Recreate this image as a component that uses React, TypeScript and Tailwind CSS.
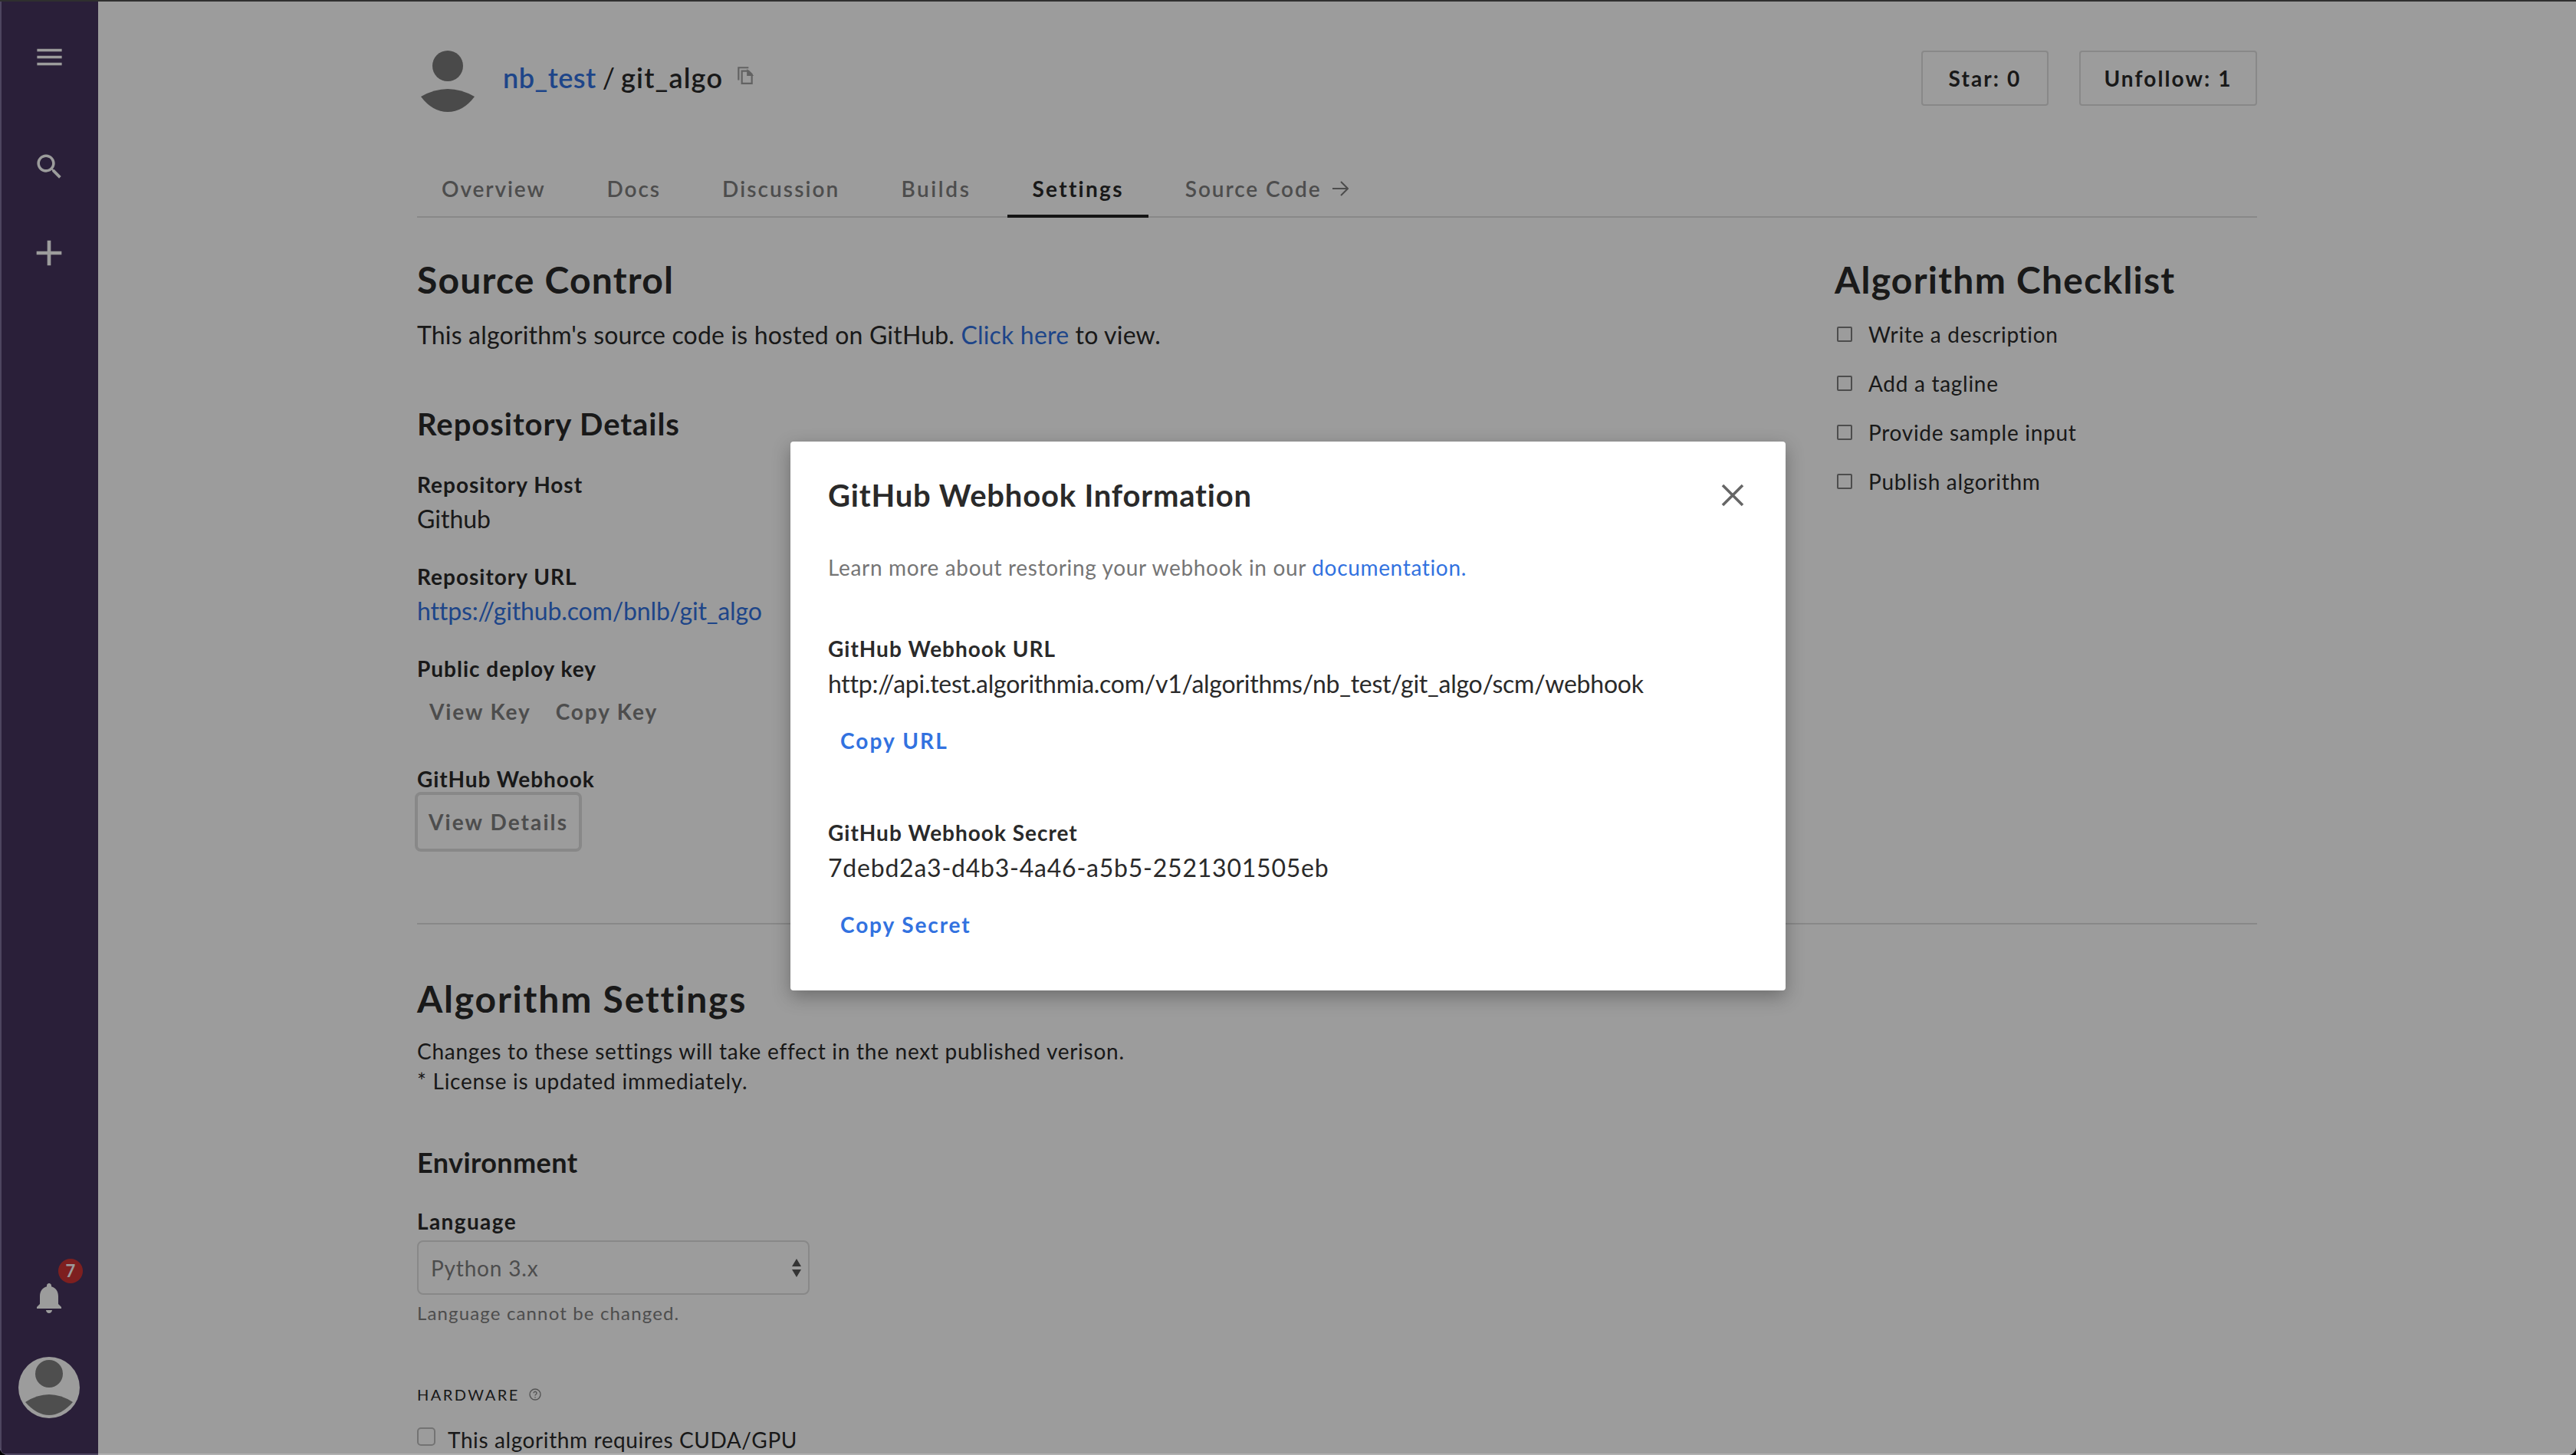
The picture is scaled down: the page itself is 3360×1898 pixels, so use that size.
import React from "react";

const Person = ({ className }: { className?: string }) => (
  <svg viewBox="0 0 70 80" className={className} fill="#7a7a7a">
    <circle cx="35" cy="20" r="20" />
    <path d="M0 60Q35 40 70 60Q55 80 35 80Q15 80 0 60Z" />
  </svg>
);

const tabs = [
  { label: "Overview", cls: "text-[#7e7e7e] tracking-[1.9px]" },
  { label: "Docs", cls: "text-[#7e7e7e] tracking-[1.9px]" },
  { label: "Discussion", cls: "text-[#7e7e7e] tracking-[2.1px]" },
  { label: "Builds", cls: "text-[#7e7e7e] tracking-[2.6px]" },
  { label: "Settings", cls: "text-[#2a2a2a] font-bold tracking-[2.3px]" },
];
const checklist = ["Write a description", "Add a tagline", "Provide sample input", "Publish algorithm"];

export default function App() {
  return (
    <div className="w-[3360px] h-[1898px] bg-black overflow-hidden font-['Lato','Liberation_Sans',sans-serif] text-[#2a2a2a]">
      <div className="relative w-full h-full overflow-hidden rounded-b-[10px] bg-white flex flex-col">
        <div className="h-[2px] bg-[#4d4d4d] shrink-0" />
        <div className="flex flex-1 min-h-0">
          <aside className="w-[128px] shrink-0 bg-[#45345d] border-l-2 border-[#7e719c] pr-[2px] pb-[2px] flex flex-col items-center">
            <svg viewBox="0 0 24 24" fill="#fff" className="w-[43px] h-[43px] mt-[51px] shrink-0"><path d="M3 18h18v-2H3v2zm0-5h18v-2H3v2zm0-7v2h18V6H3z" /></svg>
            <svg viewBox="0 0 24 24" fill="#fff" className="w-[43px] h-[43px] mt-[100px] shrink-0"><path d="M15.5 14h-.79l-.28-.27C15.41 12.59 16 11.11 16 9.5 16 5.91 13.09 3 9.5 3S3 5.91 3 9.5 5.91 16 9.5 16c1.61 0 3.09-.59 4.23-1.57l.27.28v.79l5 4.99L20.49 19l-4.99-5zm-6 0C7.01 14 5 11.99 5 9.5S7.01 5 9.5 5 14 7.01 14 9.5 11.99 14 9.5 14z" /></svg>
            <svg viewBox="0 0 24 24" fill="#fff" className="w-[56px] h-[56px] mt-[63px] shrink-0"><path d="M19 13h-6v6h-2v-6H5v-2h6V5h2v6h6v2z" /></svg>
            <div className="relative mt-auto w-[48px] h-[48px] shrink-0">
              <svg viewBox="0 0 24 24" fill="#fff" className="w-[48px] h-[48px]"><path d="M12 22c1.1 0 2-.9 2-2h-4c0 1.1.89 2 2 2zm6-6v-5c0-3.07-1.64-5.64-4.5-6.32V4c0-.83-.67-1.5-1.5-1.5s-1.5.67-1.5 1.5v.68C7.63 5.36 6 7.92 6 11v5l-2 2v1h16v-1l-2-2z" /></svg>
              <span className="absolute left-[36px] -top-[27px] w-[32px] h-[32px] rounded-full bg-[#cf3434] text-white text-[22px] font-bold leading-[32px] text-center">7</span>
            </div>
            <svg viewBox="0 0 80 80" className="w-[80px] h-[80px] mt-[53px] mb-[46px] shrink-0">
              <circle cx="40" cy="40" r="40" fill="#fff" />
              <circle cx="40" cy="22" r="18" fill="#808080" />
              <path d="M9 59Q40 39 71 59Q56 76 40 76Q24 76 9 59Z" fill="#808080" />
            </svg>
          </aside>

          <main className="flex-1 min-w-0">
            <div className="w-[2400px] mx-auto">
              <header className="pt-[64px] flex items-start justify-between">
                <div className="flex items-start">
                  <Person className="w-[70px] h-[80px] ml-[5px]" />
                  <div className="ml-[37px] mt-[15px] flex items-center h-[40px] text-[36px] leading-[40px] font-semibold">
                    <a className="text-[#3272e0] tracking-[0.5px]">nb_test</a>
                    <span className="mx-[8px] font-normal">/</span>
                    <span className="tracking-[1.2px]">git_algo</span>
                    <svg viewBox="0 0 24 24" fill="none" stroke="#a0a0a0" strokeWidth="2" className="w-[26px] h-[26px] ml-[16px] -mt-[6px]">
                      <path d="M4 18V3h12" />
                      <path d="M8 7h8l4 4v11H8z" />
                      <path d="M15 7v5h5z" fill="#a0a0a0" />
                    </svg>
                  </div>
                </div>
                <div className="flex gap-[40px] text-[28px] font-bold tracking-[2.1px]">
                  <button className="w-[166px] h-[72px] border-2 border-[#dedede] rounded-[4px]">Star: 0</button>
                  <button className="w-[232px] h-[72px] border-2 border-[#dedede] rounded-[4px]">Unfollow: 1</button>
                </div>
              </header>

              <nav className="mt-[64px] h-[74px] border-b-2 border-[#dedede] flex gap-[16px] text-[28px] font-semibold">
                {tabs.map((t) => (
                  <a key={t.label} className={`relative h-[72px] px-[32px] leading-[72px] ${t.cls}`}>
                    {t.label}
                    {t.label === "Settings" && <span className="absolute left-0 right-0 -bottom-[2px] h-[4px] bg-[#222]" />}
                  </a>
                ))}
                <a className="h-[72px] px-[32px] leading-[72px] flex items-center gap-[14px] text-[#7e7e7e] tracking-[1.9px]">
                  Source Code
                  <svg viewBox="0 0 22 20" fill="none" stroke="#7e7e7e" strokeWidth="2" className="w-[22px] h-[20px]"><path d="M1 10h20M12 1l9 9-9 9" /></svg>
                </a>
              </nav>

              <div className="flex mt-[51px]">
                <div className="flex-1 min-w-0">
                  <h1 className="text-[48px] leading-[60px] font-bold tracking-[1.2px]">Source Control</h1>
                  <p className="mt-[18px] text-[32px] leading-[48px] tracking-[0.18px]">This algorithm's source code is hosted on GitHub. <a className="text-[#3272e0]">Click here</a> to view.</p>
                  <h2 className="mt-[67px] text-[40px] leading-[50px] font-bold tracking-[0.95px]">Repository Details</h2>
                  <div className="mt-[34px] text-[28px] leading-[40px] font-bold tracking-[1px]">Repository Host</div>
                  <div className="mt-[1px] text-[32px] leading-[48px]">Github</div>
                  <div className="mt-[31px] text-[28px] leading-[40px] font-bold tracking-[1px]">Repository URL</div>
                  <a className="mt-[1px] block text-[32px] leading-[48px] text-[#3272e0] tracking-[-0.14px]">https://github.com/bnlb/git_algo</a>
                  <div className="mt-[31px] text-[28px] leading-[40px] font-bold tracking-[1px]">Public deploy key</div>
                  <div className="mt-[8px] flex h-[56px] items-center gap-[32px] text-[28px] font-bold tracking-[1.9px] text-[#7e7e7e] pl-[16px]">
                    <button>View Key</button>
                    <button>Copy Key</button>
                  </div>
                  <div className="mt-[42px] text-[28px] leading-[36px] font-bold tracking-[0.9px]">GitHub Webhook</div>
                  <button className="-mt-[1px] -ml-[3px] block w-[218px] h-[78px] border-[4px] border-[#dedede] rounded-[8px] text-[28px] font-bold tracking-[2.1px] text-[#7e7e7e]">View Details</button>
                </div>
                <div className="w-[551px] shrink-0">
                  <h1 className="text-[48px] leading-[60px] font-bold tracking-[1.24px]">Algorithm Checklist</h1>
                  <ul className="mt-[9px]">
                    {checklist.map((c) => (
                      <li key={c} className="h-[64px] flex items-center text-[28px] tracking-[0.7px]">
                        <span className="w-[20px] h-[20px] ml-[3px] mr-[21px] border-2 border-[#7e7e7e] rounded-[2px]" />
                        {c}
                      </li>
                    ))}
                  </ul>
                </div>
              </div>

              <hr className="mt-[93px] border-0 h-[2px] bg-[#dedede]" />

              <h1 className="mt-[67px] text-[48px] leading-[60px] font-bold tracking-[1.8px]">Algorithm Settings</h1>
              <p className="mt-[19px] text-[28px] leading-[39px] tracking-[0.73px]">Changes to these settings will take effect in the next published verison.<br />* License is updated immediately.</p>
              <h2 className="mt-[61px] text-[36px] leading-[50px] font-bold tracking-[0.4px]">Environment</h2>
              <div className="mt-[32px] text-[28px] leading-[40px] font-bold tracking-[1.4px]">Language</div>
              <div className="mt-[5px] w-[512px] h-[71px] border-2 border-[#dedede] rounded-[8px] pl-[16px] pr-[8px] flex items-center justify-between text-[28px] text-[#7e7e7e] tracking-[0.8px]">
                <span>Python 3.x</span>
                <svg viewBox="0 0 14 24" fill="#555" className="w-[14px] h-[24px]"><path d="M7 0l6 10H1zM7 24L1 14h12z" /></svg>
              </div>
              <div className="mt-[8px] text-[24px] leading-[32px] text-[#7e7e7e] tracking-[1.15px]">Language cannot be changed.</div>
              <div className="mt-[75px] h-[30px] flex items-center text-[20px] tracking-[2.5px]">
                HARDWARE
                <svg viewBox="0 0 16 16" fill="none" stroke="#8a8a8a" strokeWidth="1.4" className="w-[16px] h-[16px] ml-[12px]">
                  <circle cx="8" cy="8" r="7" />
                  <path d="M6 6.2a2 2 0 1 1 3 1.8c-.7.4-1 .8-1 1.6M8 11.2v1.2" />
                </svg>
              </div>
              <div className="mt-[20px] h-[48px] flex items-center text-[28px] tracking-[0.6px]">
                <span className="w-[24px] h-[24px] -mt-[8px] mr-[16px] border-2 border-[#bdbdbd] rounded-[5px]" />
                This algorithm requires CUDA/GPU
              </div>
            </div>
          </main>
        </div>

        <div className="absolute inset-x-0 top-0 bottom-[2px] bg-black/[0.388] flex justify-center items-start">
          <div className="mt-[576px] w-[1298px] h-[716px] bg-white rounded-[4px] shadow-[0_8px_24px_rgba(0,0,0,0.3)] pl-[49px] pr-[50px] pt-[45px]">
            <div className="flex items-center justify-between h-[50px]">
              <h3 className="text-[40px] leading-[50px] font-bold tracking-[0.8px]">GitHub Webhook Information</h3>
              <svg viewBox="0 0 30 30" fill="none" stroke="#666" strokeWidth="3.6" className="w-[30px] h-[30px] mr-[4px]"><path d="M2 2l26 26M28 2L2 28" /></svg>
            </div>
            <p className="mt-[49px] text-[28px] leading-[40px] text-[#757575] tracking-[0.66px]">Learn more about restoring your webhook in our <a className="text-[#3272e0]">documentation.</a></p>
            <div className="mt-[68px] text-[28px] leading-[36px] font-bold tracking-[1px]">GitHub Webhook URL</div>
            <div className="mt-[4px] text-[32px] leading-[48px] tracking-[-0.26px]">http://api.test.algorithmia.com/v1/algorithms/nb_test/git_algo/scm/webhook</div>
            <button className="mt-[22px] block h-[56px] pl-[16px] text-[28px] font-bold tracking-[2.1px] text-[#3272e0]">Copy URL</button>
            <div className="mt-[74px] text-[28px] leading-[36px] font-bold tracking-[1px]">GitHub Webhook Secret</div>
            <div className="mt-[4px] text-[32px] leading-[48px] tracking-[0.77px]">7debd2a3-d4b3-4a46-a5b5-2521301505eb</div>
            <button className="mt-[22px] block h-[56px] pl-[16px] text-[28px] font-bold tracking-[1.9px] text-[#3272e0]">Copy Secret</button>
          </div>
        </div>

        <div className="absolute left-0 bottom-0 w-full h-[2px] flex">
          <div className="w-[128px] bg-[#4d4560]" />
          <div className="flex-1 bg-[#b0b0b0]" />
        </div>
      </div>
    </div>
  );
}
